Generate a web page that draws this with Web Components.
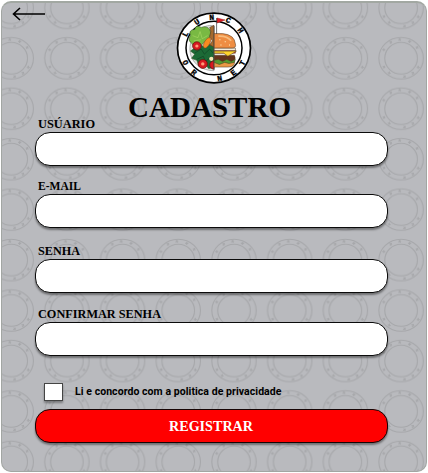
<!DOCTYPE html>
<html lang="pt"><head><meta charset="utf-8"><title>Cadastro</title>
<style>html,body{margin:0;width:428px;height:473px;overflow:hidden;background:#fff}</style></head>
<body>
<register-page>
  <back-arrow slot="back"></back-arrow>
  <lunch-logo slot="logo"></lunch-logo>
  <display-text slot="title" text="CADASTRO" width="163" size="28.5"></display-text>
  <form-field label="USÚARIO" width="57"></form-field>
  <form-field label="E-MAIL" width="43" style="margin-top:15px"></form-field>
  <form-field label="SENHA" width="42" style="margin-top:18px"></form-field>
  <form-field label="CONFIRMAR SENHA" width="123" style="margin-top:16px"></form-field>
  <check-line>Li e concordo com a politica de privacidade</check-line>
  <submit-button><display-text text="REGISTRAR" width="84" size="15"></display-text></submit-button>
</register-page>
<script>
const define=(name,html)=>customElements.define(name,class extends HTMLElement{
  connectedCallback(){
    if(this.shadowRoot)return;
    this.attachShadow({mode:'open'}).innerHTML=typeof html==='function'?html(this):html;
  }
});

define('plate-pattern',()=>{
  const marks=[-4,26,55,-32,-63,119,143,170,218,242]
    .map(a=>{const r=a*Math.PI/180,x=28+19.4*Math.sin(r),y=25-18.6*Math.cos(r);
      return `<path d="M-1.1-1.1 1.1 1.1M1.1-1.1-1.1 1.1" transform="translate(${x.toFixed(1)} ${y.toFixed(1)}) rotate(${a+20})"/>`}).join('');
  return `<style>:host{display:block;width:100%;height:100%}svg{display:block}</style>
  <svg width="425" height="470"><defs><pattern id="p" width="55.7" height="50.45" x="-18.8" y="-20.2" patternUnits="userSpaceOnUse">
  <g fill="none" stroke="#a6a7aa" stroke-width="1.1"><ellipse cx="28" cy="25" rx="22.2" ry="20.8"/><ellipse cx="28" cy="25" rx="16.3" ry="15.8"/>${marks}</g></pattern></defs>
  <rect width="425" height="470" fill="url(#p)"/></svg>`});

define('back-arrow',`<style>:host{display:block;width:34px;height:14px}svg{display:block}</style>
<svg width="34" height="14" fill="none" stroke="#000" stroke-width="1.6"><path d="M1.5 7H33M8 1 1.5 7 8 13"/></svg>`);

define('display-text',e=>{const w=+e.getAttribute('width'),s=+e.getAttribute('size'),h=Math.ceil(s*.75);
  return `<style>:host{display:block}svg{display:block;overflow:visible}text{font:bold ${s}px "Liberation Serif",serif}</style>
  <svg width="${w}" height="${h}"><text x="0" y="${h-1}" textLength="${w}" lengthAdjust="spacingAndGlyphs">${e.getAttribute('text')}</text></svg>`});

define('lunch-logo',()=>{
  const L=[['L',-63],['U',-32],['N',-4],['C',26],['H',55],['T',119],['E',143],['N',170],['R',218],['O',242]].map(([c,a])=>{
    const low=a>90,r=a*Math.PI/180,x=32.3*Math.sin(r),y=-32.3*Math.cos(r);
    return `<text transform="translate(${x.toFixed(1)} ${y.toFixed(1)}) rotate(${low?a-180:a})" y="2.6">${c}</text>`}).join('');
  return `<style>:host{display:block;width:76px;height:72px}svg{display:block}text{font:bold 8px "Liberation Mono",monospace;text-anchor:middle;stroke:#000;stroke-width:.35}</style>
  <svg width="76" height="72" viewBox="-38 -36 76 72"><g transform="scale(1 .955)">
  <circle r="36.5" fill="#fff" stroke="#000" stroke-width="1.7"/><circle r="28" fill="#fff" stroke="#000" stroke-width="1.5"/>${L}</g>
  <g transform="scale(1.07 1.03)">
  <path d="M0-21C-7-25-20-15-22-4-25 10-15 22 0 22Z" fill="#dfe3dd" stroke="#999" stroke-width=".7"/>
  <g stroke="#274f1b" stroke-width=".5"><path d="M-14-4Q-20-1-21-5-25-7-22-12-24-18-18-18-17-23-12-20-7-22-4-18-2-15-4-11-5-6-9-6-12-1-14-4Z" fill="#79b943"/><path d="m-20-12 5 2 2-6 2 7 5-3M-19-7l7-1" fill="none" stroke="#b0df69"/>
  <path d="M-18 0-12-3-8 0-4-4 0-2V19L-5 20-8 16-14 18-16 12-21 10-18 6-22 3Z" fill="#1c6a36"/><path d="m-18 5 6-4 3 5 5-5 3 4m-15 6 6-3 2 5 5-4" fill="none" stroke="#0b381e"/></g>
  <path d="M0-22V-1L-4-3-1.500-7-4-11-3-16-4-20Z" fill="#a56a2e" stroke="#563018" stroke-width=".5"/>
  <ellipse cx="-6.500" cy="-5" rx="2.500" ry="5.500" transform="rotate(28 -6.500 -5)" fill="#f78b20" stroke="#9b4811" stroke-width=".5"/>
  <g fill="#d71920" stroke="#69120b" stroke-width=".7"><circle cx="-16" cy="-2" r="4"/><circle cx="-10.500" cy="15.500" r="4.300"/><path d="M0 12.500a4 4 0 1 0 0 8Z"/></g>
  <g fill="#ff9a78"><circle cx="-16" cy="-2" r="1.500"/><circle cx="-10.500" cy="15.500" r="1.600"/></g>
  <circle cx="-2.500" cy="10.500" r="2" fill="#f3e6b1"/>
  <g stroke="#51351d" stroke-width=".5"><path d="M0 13H19Q20 18.500 13 18.500H0Z" fill="#e99846"/><path d="M0 7H19Q21 10 18 13H0Z" fill="#65331b"/><path d="M0 12 4 11 8 13 12 11 16 13 20 11 19 14 14 15 10 14 5 16 0 14Z" fill="#529a30"/><path d="M0 2H20V5H0Z" fill="#d8362b"/><path d="M0 3H21L13 8 9 5H0Z" fill="#ffd52d"/><path d="M0 0H20V2.500H0Z" fill="#f4eddc"/><path d="M0-14H8Q19-13 20-4 21 0 17 0H0Z" fill="#ee8d42"/></g>
  <path d="M4-11.500Q12-12 16-7" fill="none" stroke="#f8bd7e" stroke-width="1.600"/><path d="M5-8h1m4 2h1m-5 3h1m7 0h1" stroke="#fff2bf"/>
  </g>
  <path d="M0-22V22" stroke="#555" stroke-width=".7"/><path d="M3-30 11-28 3-25Z" fill="#e31b23" stroke="#8c1715" stroke-width=".5"/><path d="M2.600-30V-14" stroke="#333" stroke-width=".7"/>
  </svg>`});

define('form-field',e=>`<style>:host{display:block}display-text{margin:0 0 3px 3px}
input{display:block;box-sizing:border-box;width:353px;height:34px;margin:0;padding:0 14px;background:#fff;border:1.5px solid #0b0b0b;border-radius:15px;box-shadow:0 2px 2px #0006;outline:none}</style>
<display-text text="${e.getAttribute('label')}" width="${e.getAttribute('width')}" size="12.5"></display-text><input aria-label="${e.getAttribute('label')}">`);

define('check-line',`<style>:host{display:flex;align-items:center;height:19px;margin:26px 0 0 9px;gap:12.5px;font:bold 10.5px Roboto,sans-serif;color:#000}
i{box-sizing:border-box;width:18.5px;height:18px;background:#fff;border:1px solid #444;box-shadow:0 2px 2px #0005}span{white-space:nowrap;letter-spacing:.06px}</style><i></i><span><slot></slot></span>`);

define('submit-button',`<style>:host{display:block;margin-top:8px}
button{display:flex;align-items:center;justify-content:center;box-sizing:border-box;width:353px;height:34px;margin:0;padding:0 2px 0 0;background:#f00;border:1.5px solid #160505;border-radius:15px;box-shadow:0 2px 2px #0006}
::slotted(*){fill:#fff}</style><button><slot></slot></button>`);

define('register-page',`<style>:host{display:block;box-sizing:border-box;width:428px;height:473px;padding:1px;background:#fff}
main{position:relative;box-sizing:border-box;width:426px;height:471px;border:1px solid #a2a6a3;border-top:2px solid #a2a8a2;border-radius:10px;background:#b9babe;overflow:hidden}
plate-pattern{position:absolute;inset:0}
.content{position:relative;display:grid;grid-template-rows:82px 34px auto}
header{display:grid;grid-template-columns:164px 76px;align-items:start;padding:4px 0 0 10px}
slot[name=logo]{display:block;padding-top:5px}
.title{display:flex;justify-content:center;padding:11px 2px 0 0;width:417px;box-sizing:border-box}
form{padding:0 0 0 33px}
</style><main><plate-pattern></plate-pattern><div class="content"><header><slot name="back"></slot><slot name="logo"></slot></header><div class="title"><slot name="title"></slot></div><form><slot></slot></form></div></main>`);
</script></body></html>
